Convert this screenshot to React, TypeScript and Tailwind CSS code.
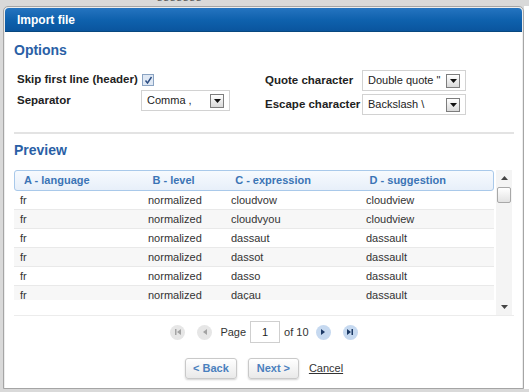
import { FC, ReactNode } from "react";

const rows = [
  ["fr", "normalized", "cloudvow", "cloudview"],
  ["fr", "normalized", "cloudvyou", "cloudview"],
  ["fr", "normalized", "dassaut", "dassault"],
  ["fr", "normalized", "dassot", "dassault"],
  ["fr", "normalized", "dasso", "dassault"],
  ["fr", "normalized", "daçau", "dassault"],
];

const colWidths = ["w-[128px]", "w-[83px]", "w-[135px]", "w-[134px]"];

const Select: FC<{ value: string; width: string }> = ({ value, width }) => (
  <div className={`${width} h-[21px] border border-[#d2d2d2] bg-white flex items-center`}>
    <span className="flex-1 pl-[5px] text-[11px] text-[#222] whitespace-nowrap overflow-hidden">{value}</span>
    <div className="shrink-0 w-[14px] h-[14px] mr-[5px] border border-[#7d7d7d] bg-gradient-to-b from-[#ffffff] to-[#d9d9d9] flex items-center justify-center">
      <svg width="7" height="4" viewBox="0 0 7 4">
        <path d="M0 0h7L3.5 4z" fill="#111" />
      </svg>
    </div>
  </div>
);

const PagerBtn: FC<{ active?: boolean; children: ReactNode }> = ({ active, children }) => (
  <div
    className={`w-[15px] h-[15px] rounded-full flex items-center justify-center ${
      active ? "bg-[#c6d9f0] text-[#1c3a66]" : "bg-[#e6e6e6] text-[#a3a3a3]"
    }`}
  >
    {children}
  </div>
);

export default function App() {
  return (
    <div className="w-[529px] h-[392px] bg-[#d9d9d9] overflow-hidden font-['Liberation_Sans',Arial,sans-serif] text-[11px] text-[#333]">
      {/* window behind the dialog */}
      <div className="h-[6px] pl-[157px] overflow-hidden">
        <div className="-mt-[9px] text-[11px] leading-[13px] text-[#555] tracking-[1px]">sssssss</div>
      </div>

      <div className="flex h-[383px]">
        <div className="w-[3px]" />
        <div className="w-[521px] h-[383px] border border-[#a5a5a5] rounded-t-[5px] bg-[#ededed] p-[1px] pb-0 flex flex-col">
          <div className="h-[24px] rounded-t-[4px] bg-gradient-to-b from-[#2474c0] via-[#0f62ae] to-[#0a559e] border-b border-[#08487f] flex items-center pl-[12px]">
            <span className="text-white font-bold text-[12px]">Import file</span>
          </div>

          <div className="flex-1 bg-white pl-[9px] pr-[8px]">
            <h2 className="mt-[10px] h-[16px] leading-[16px] text-[14px] font-bold text-[#2a5fa6]">Options</h2>

            <div className="mt-[12px] flex">
              <div className="w-[251px] pl-[3px] pt-[3px] flex flex-col gap-[3px]">
                <div className="flex items-center h-[14px]">
                  <span className="w-[125px] text-[11.5px] font-bold text-[#222] whitespace-nowrap">Skip first line (header)</span>
                  <div className="w-[12px] h-[12px] border border-[#8aa3c2] bg-[#dfe8f4] flex items-center justify-center">
                    <svg width="9" height="9" viewBox="0 0 9 9">
                      <path d="M1.5 4.5l2 2.5L7.5 1" fill="none" stroke="#2b4c82" strokeWidth="1.4" />
                    </svg>
                  </div>
                </div>
                <div className="flex items-center h-[21px]">
                  <span className="w-[124px] text-[11.5px] font-bold text-[#222]">Separator</span>
                  <Select value="Comma ," width="w-[89px]" />
                </div>
              </div>

              <div className="flex flex-col gap-[3px]">
                <div className="flex items-center h-[21px]">
                  <span className="w-[97px] text-[11.5px] font-bold text-[#222] whitespace-nowrap">Quote character</span>
                  <Select value={'Double quote "'} width="w-[104px]" />
                </div>
                <div className="flex items-center h-[21px]">
                  <span className="w-[97px] text-[11.5px] font-bold text-[#222] whitespace-nowrap">Escape character</span>
                  <Select value="Backslash \" width="w-[104px]" />
                </div>
              </div>
            </div>

            <div className="mt-[17px] h-[2px] bg-[#e3e3e3]" />

            <h2 className="mt-[8px] h-[16px] leading-[16px] text-[14px] font-bold text-[#2a5fa6]">Preview</h2>

            <div className="mt-[12px] flex h-[146px] border-b border-[#ececec]">
              <div className="w-[480px] flex flex-col">
                <div className="h-[21px] flex items-center rounded-[3px] border border-[#a9c9ea] bg-gradient-to-b from-[#f7fafe] to-[#e7eff9]">
                  {["A - language", "B - level", "C - expression", "D - suggestion"].map((h, i) => (
                    <div key={h} className={`${colWidths[i]} ${i === 0 ? "pl-[9px]" : "pl-[10px]"} text-[11px] font-bold text-[#3b74b5]`}>
                      {h}
                    </div>
                  ))}
                </div>
                <div className="h-[109px] overflow-hidden">
                  {rows.map((r, ri) => (
                    <div
                      key={ri}
                      className={`h-[19px] flex items-center border-b border-[#e9e9e9] ${ri % 2 ? "bg-[#f7f7f7]" : "bg-white"}`}
                    >
                      {r.map((c, ci) => (
                        <div key={ci} className={`${colWidths[ci]} pl-[6px] text-[11px] text-[#333]`}>
                          {c}
                        </div>
                      ))}
                    </div>
                  ))}
                </div>
              </div>

              {/* scrollbar */}
              <div className="ml-[2px] w-[16px] bg-[#f4f4f4] flex flex-col items-center">
                <div className="h-[16px] flex items-center justify-center">
                  <svg width="7" height="4" viewBox="0 0 7 4">
                    <path d="M0 4h7L3.5 0z" fill="#444" />
                  </svg>
                </div>
                <div className="mt-[1px] w-[14px] h-[16px] rounded-[2px] border border-[#a8a8a8] bg-gradient-to-b from-[#ffffff] to-[#e2e2e2]" />
                <div className="flex-1" />
                <div className="h-[16px] flex items-center justify-center">
                  <svg width="7" height="4" viewBox="0 0 7 4">
                    <path d="M0 0h7L3.5 4z" fill="#444" />
                  </svg>
                </div>
              </div>
            </div>

            {/* pager */}
            <div className="mt-[5px] h-[22px] flex items-center justify-center">
              <PagerBtn>
                <svg width="8" height="8" viewBox="0 0 8 8">
                  <path d="M1 1h1.5v6H1zM7 1v6L3 4z" fill="currentColor" />
                </svg>
              </PagerBtn>
              <div className="ml-[12px]">
                <PagerBtn>
                  <svg width="8" height="8" viewBox="0 0 8 8">
                    <path d="M6 1v6L2 4z" fill="currentColor" />
                  </svg>
                </PagerBtn>
              </div>
              <span className="ml-[8px] text-[11px] text-[#333]">Page</span>
              <div className="ml-[4px] w-[30px] h-[22px] border border-[#cfcfcf] bg-white flex items-center justify-center text-[11px] text-[#222]">
                1
              </div>
              <span className="ml-[4px] text-[11px] text-[#333]">of 10</span>
              <div className="ml-[7px]">
                <PagerBtn active>
                  <svg width="8" height="8" viewBox="0 0 8 8">
                    <path d="M2 1v6L6 4z" fill="currentColor" />
                  </svg>
                </PagerBtn>
              </div>
              <div className="ml-[12px]">
                <PagerBtn active>
                  <svg width="8" height="8" viewBox="0 0 8 8">
                    <path d="M1 1v6L5 4zM5.5 1H7v6H5.5z" fill="currentColor" />
                  </svg>
                </PagerBtn>
              </div>
            </div>

            {/* buttons */}
            <div className="mt-[15px] flex items-center justify-center">
              <button className="w-[52px] h-[21px] rounded-[3px] border border-[#c9c9c9] bg-gradient-to-b from-[#ffffff] to-[#e9e9e9] shadow-[0_1px_2px_rgba(0,0,0,0.18)] text-[11px] font-bold text-[#4a80be]">
                &lt; Back
              </button>
              <button className="ml-[11px] w-[51px] h-[21px] rounded-[3px] border border-[#c9c9c9] bg-gradient-to-b from-[#ffffff] to-[#e9e9e9] shadow-[0_1px_2px_rgba(0,0,0,0.18)] text-[11px] font-bold text-[#4a80be]">
                Next &gt;
              </button>
              <span className="ml-[10px] text-[11px] text-[#333] underline">Cancel</span>
            </div>
          </div>
        </div>
        <div className="flex-1 bg-white" />
      </div>
    </div>
  );
}
